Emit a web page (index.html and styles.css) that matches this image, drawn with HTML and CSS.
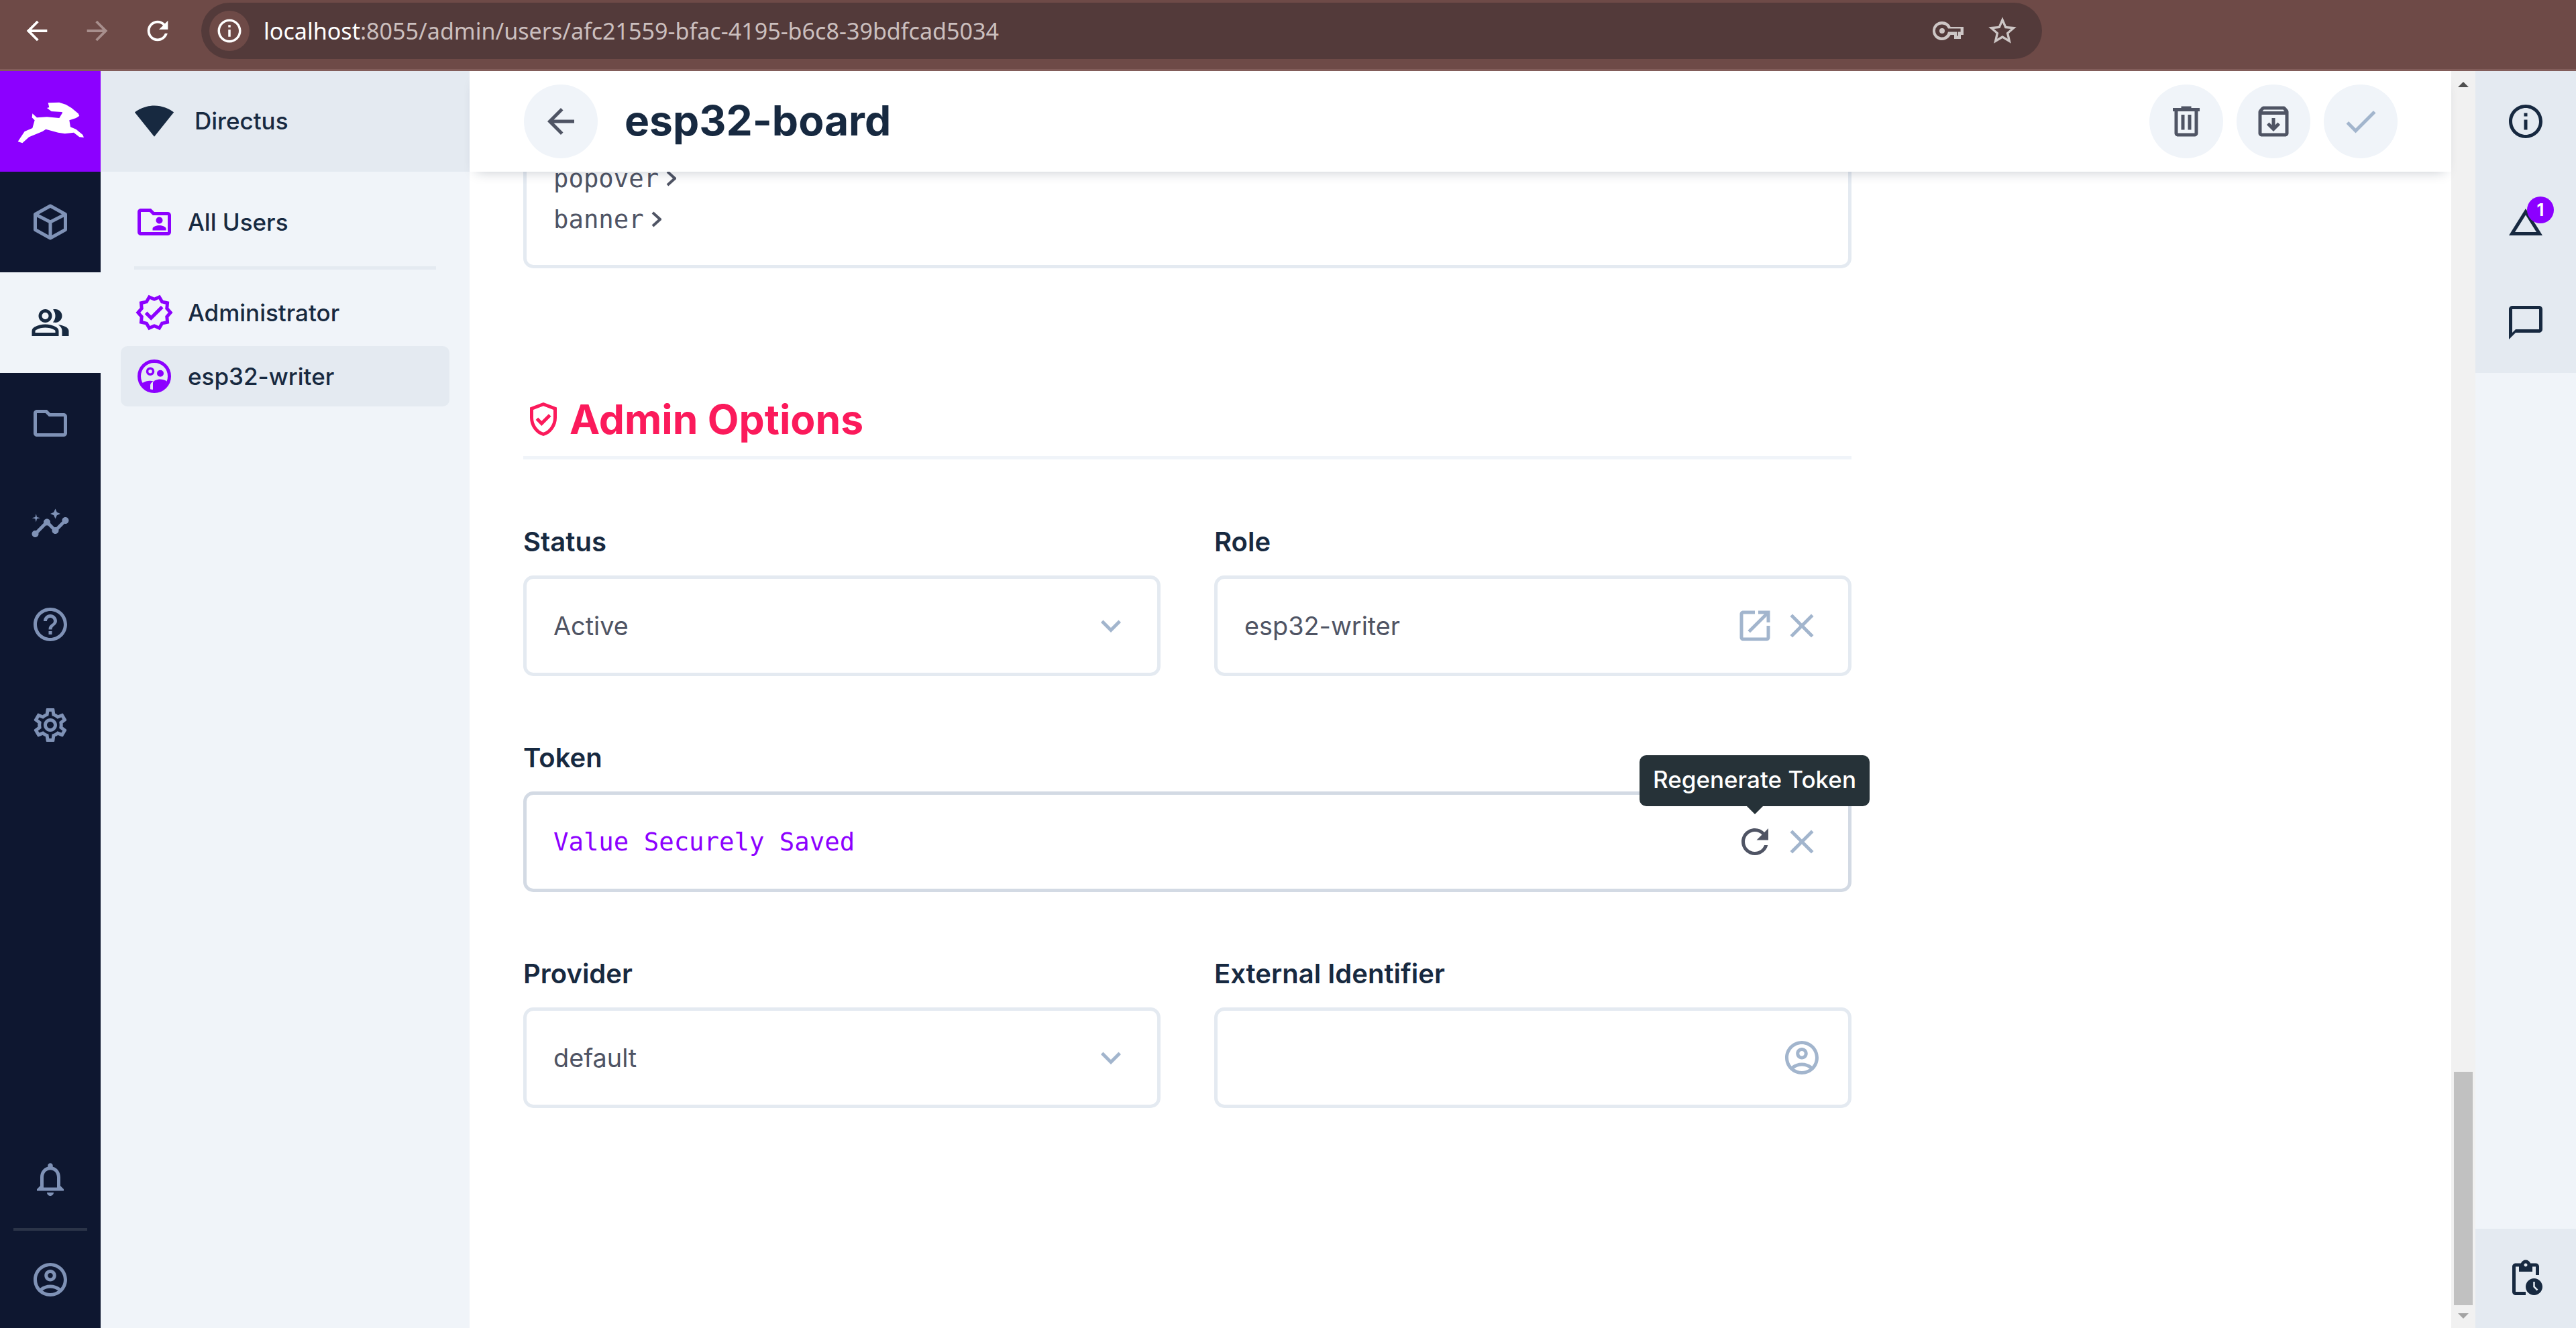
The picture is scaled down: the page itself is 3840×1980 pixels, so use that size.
FILE: index.html
```html
<!DOCTYPE html>
<html>
<head>
  <title>esp32-board</title>
  <link rel="stylesheet" href="styles.css">
</head>
<body>
  <div class="browser">
    <svg class="chrome-icon" viewBox="0 0 24 24"><path d="M20 11H7.83l5.59-5.59L12 4l-8 8 8 8 1.41-1.41L7.83 13H20v-2z"/></svg>
    <svg class="chrome-icon dim" viewBox="0 0 24 24"><path d="M12 4l-1.41 1.41L16.17 11H4v2h12.17l-5.58 5.59L12 20l8-8z"/></svg>
    <svg class="chrome-icon" viewBox="0 0 24 24"><path d="M17.65 6.35C16.2 4.9 14.21 4 12 4c-4.42 0-7.99 3.58-7.99 8s3.57 8 7.99 8c3.73 0 6.84-2.55 7.73-6h-2.08c-.82 2.33-3.04 4-5.65 4-3.31 0-6-2.69-6-6s2.69-6 6-6c1.66 0 3.14.69 4.22 1.78L13 11h7V4l-2.35 2.35z"/></svg>
    <div class="url-bar">
      <div class="url-chip">
        <svg viewBox="0 0 24 24"><path d="M11 7h2v2h-2zm0 4h2v6h-2zm1-9C6.48 2 2 6.48 2 12s4.48 10 10 10 10-4.48 10-10S17.52 2 12 2zm0 18c-4.41 0-8-3.59-8-8s3.59-8 8-8 8 3.59 8 8-3.59 8-8 8z"/></svg>
      </div>
      <div class="url-text"><span class="url-host">localhost</span>:8055/admin/users/afc21559-bfac-4195-b6c8-39bdfcad5034</div>
      <svg class="url-key" viewBox="0 0 24 24"><path d="M7 5a7 7 0 1 0 6.3 10H16v3h5v-3h2V9H13.3A7 7 0 0 0 7 5zm0 2.2a4.8 4.8 0 0 1 4.5 3h9.3v2.6h-1.9v3h-.8v-3h-6.6A4.8 4.8 0 1 1 7 7.2zM7 10a2 2 0 1 0 0 4 2 2 0 0 0 0-4z"/></svg>
      <svg class="url-star" viewBox="0 0 24 24"><path d="M22 9.24l-7.19-.62L12 2 9.19 8.63 2 9.24l5.46 4.73L5.82 21 12 17.27 18.18 21l-1.63-7.03L22 9.24zM12 15.4l-3.76 2.27 1-4.28-3.32-2.88 4.38-.38L12 6.1l1.71 4.04 4.38.38-3.32 2.88 1 4.28L12 15.4z"/></svg>
    </div>
  </div>

  <div class="app">
    <div class="modules">
      <div class="logo">
        <svg viewBox="0 0 390 270"><path d="M50 225 L70 232 L100 205 L160 180 L175 170 L230 185 L260 190 L300 185 L325 205 L345 207 L340 195 L310 170 L285 160 L280 130 L310 120 L325 110 L320 100 L290 75 L265 60 L235 50 L185 52 L190 72 L180 75 L200 90 L245 93 L250 95 L235 120 L180 115 L135 118 L115 100 L113 118 L125 130 L115 165 L80 180 Z"/></svg>
      </div>
      <div class="module">
        <svg class="icon" viewBox="0 0 24 24"><path class="line" d="M12 2.4 21 7.4V16.6L12 21.6 3 16.6V7.4ZM3 7.4 12 12 21 7.4M12 12V21.6"/></svg>
      </div>
      <div class="module active">
        <svg class="icon" viewBox="0 0 24 24"><path d="M1 20v-2.8c0-.57.15-1.09.44-1.56.29-.47.68-.83 1.16-1.09 1.03-.52 2.08-.9 3.15-1.16C6.82 13.13 7.9 13 9 13s2.18.13 3.25.39c1.07.26 2.12.64 3.15 1.16.48.25.87.62 1.16 1.09.29.47.44.99.44 1.56V20H1zm18 0v-3c0-.73-.2-1.43-.61-2.11-.41-.67-.99-1.25-1.74-1.74.85.1 1.65.27 2.4.51.75.24 1.45.54 2.1.88.6.33 1.06.71 1.38 1.11.32.4.47.85.47 1.35V20h-4zM9 12c-1.1 0-2.04-.39-2.83-1.18C5.39 10.04 5 9.1 5 8s.39-2.04 1.18-2.83C6.96 4.39 7.9 4 9 4s2.04.39 2.83 1.18C12.61 5.96 13 6.9 13 8s-.39 2.04-1.18 2.83C11.04 11.61 10.1 12 9 12zm10-4c0 1.1-.39 2.04-1.18 2.83C17.04 11.61 16.1 12 15 12c-.18 0-.42-.02-.7-.06-.28-.04-.52-.09-.7-.14.45-.53.79-1.12 1.04-1.77.24-.65.36-1.32.36-2.03s-.12-1.38-.36-2.03c-.24-.65-.59-1.24-1.04-1.77.23-.08.47-.14.7-.16.23-.03.47-.04.7-.04 1.1 0 2.04.39 2.83 1.18C18.61 5.96 19 6.9 19 8zM3 18h12v-.8c0-.18-.05-.35-.14-.5-.09-.15-.21-.27-.36-.35-.9-.45-1.81-.79-2.73-1.01C10.85 15.11 9.93 15 9 15s-1.85.11-2.77.34c-.92.23-1.83.56-2.73 1.01-.15.08-.27.2-.36.35-.09.15-.14.32-.14.5V18zM9 10c.55 0 1.02-.2 1.41-.59C10.8 9.02 11 8.55 11 8s-.2-1.02-.59-1.41C10.02 6.2 9.55 6 9 6s-1.02.2-1.41.59C7.2 6.98 7 7.45 7 8s.2 1.02.59 1.41C7.98 9.8 8.45 10 9 10z" fill-rule="evenodd"/></svg>
      </div>
      <div class="module">
        <svg class="icon" viewBox="0 0 24 24"><path d="M20 6h-8l-2-2H4c-1.1 0-1.99.9-1.99 2L2 18c0 1.1.9 2 2 2h16c1.1 0 2-.9 2-2V8c0-1.1-.9-2-2-2zm0 12H4V6h5.17l2 2H20v10z"/></svg>
      </div>
      <div class="module">
        <svg class="icon" viewBox="0 0 24 24"><path d="M21 8c-1.45 0-2.26 1.44-1.93 2.51l-3.55 3.56c-.3-.09-.74-.09-1.04 0l-2.55-2.55C12.27 10.45 11.46 9 10 9c-1.45 0-2.27 1.44-1.93 2.52l-4.56 4.55C2.44 15.74 1 16.55 1 18c0 1.1.9 2 2 2 1.45 0 2.26-1.44 1.93-2.51l4.55-4.56c.3.09.74.09 1.04 0l2.55 2.55C12.73 16.55 13.54 18 15 18c1.45 0 2.27-1.44 1.93-2.52l3.56-3.55c1.07.33 2.51-.48 2.51-1.93 0-1.1-.9-2-2-2zM15 9l.94-2.07L18 6l-2.06-.93L15 3l-.92 2.07L12 6l2.08.93zM3.5 11L4 9l2-.5L4 8l-.5-2L3 8l-2 .5L3 9z"/></svg>
      </div>
      <div class="module">
        <svg class="icon" viewBox="0 0 24 24"><path d="M11 18h2v-2h-2v2zm1-16C6.48 2 2 6.48 2 12s4.48 10 10 10 10-4.48 10-10S17.52 2 12 2zm0 18c-4.41 0-8-3.59-8-8s3.59-8 8-8 8 3.59 8 8-3.59 8-8 8zm0-14c-2.21 0-4 1.79-4 4h2c0-1.1.9-2 2-2s2 .9 2 2c0 2-3 1.75-3 5h2c0-2.25 3-2.5 3-5 0-2.21-1.79-4-4-4z"/></svg>
      </div>
      <div class="module">
        <svg class="icon" viewBox="0 0 24 24"><path d="M19.43 12.98c.04-.32.07-.64.07-.98 0-.34-.03-.66-.07-.98l2.11-1.65c.19-.15.24-.42.12-.64l-2-3.46c-.09-.16-.26-.25-.44-.25-.06 0-.12.01-.17.03l-2.49 1c-.52-.4-1.08-.73-1.69-.98l-.38-2.65C14.46 2.18 14.25 2 14 2h-4c-.25 0-.46.18-.49.42l-.38 2.65c-.61.25-1.17.59-1.69.98l-2.49-1c-.06-.02-.12-.03-.18-.03-.17 0-.34.09-.43.25l-2 3.46c-.13.22-.07.49.12.64l2.11 1.65c-.04.32-.07.65-.07.98 0 .33.03.66.07.98l-2.11 1.65c-.19.15-.24.42-.12.64l2 3.46c.09.16.26.25.44.25.06 0 .12-.01.17-.03l2.49-1c.52.4 1.08.73 1.69.98l.38 2.65c.03.24.24.42.49.42h4c.25 0 .46-.18.49-.42l.38-2.65c.61-.25 1.17-.59 1.69-.98l2.49 1c.06.02.12.03.18.03.17 0 .34-.09.43-.25l2-3.46c.12-.22.07-.49-.12-.64l-2.11-1.65zm-1.98-1.71c.04.31.05.52.05.73 0 .21-.02.43-.05.73l-.14 1.13.89.7 1.08.84-.7 1.21-1.27-.51-1.04-.42-.9.68c-.43.32-.84.56-1.25.73l-1.06.43-.16 1.13-.2 1.35h-1.4l-.19-1.35-.16-1.13-1.06-.43c-.43-.18-.83-.41-1.23-.71l-.91-.7-1.06.43-1.27.51-.7-1.21 1.08-.84.89-.7-.14-1.13c-.03-.31-.05-.54-.05-.74s.02-.43.05-.73l.14-1.13-.89-.7-1.08-.84.7-1.21 1.27.51 1.04.42.9-.68c.43-.32.84-.56 1.25-.73l1.06-.43.16-1.13.2-1.35h1.39l.19 1.35.16 1.13 1.06.43c.43.18.83.41 1.23.71l.91.7 1.06-.43 1.27-.51.7 1.21-1.07.85-.89.7.14 1.13zM12 8c-2.21 0-4 1.79-4 4s1.79 4 4 4 4-1.79 4-4-1.79-4-4-4zm0 6c-1.1 0-2-.9-2-2s.9-2 2-2 2 .9 2 2-.9 2-2 2z"/></svg>
      </div>
      <div class="module-bottom">
        <div class="module">
          <svg class="icon" viewBox="0 0 24 24"><path d="M12 22c1.1 0 2-.9 2-2h-4c0 1.1.9 2 2 2zm6-6v-5c0-3.07-1.63-5.64-4.5-6.32V4c0-.83-.67-1.5-1.5-1.5s-1.5.67-1.5 1.5v.68C7.64 5.36 6 7.92 6 11v5l-2 2v1h16v-1l-2-2zm-2 1H8v-6c0-2.48 1.51-4.5 4-4.5s4 2.02 4 4.5v6z"/></svg>
        </div>
        <div class="module-rule"></div>
        <div class="module">
          <svg class="icon" viewBox="0 0 24 24"><path d="M12 2C6.48 2 2 6.48 2 12s4.48 10 10 10 10-4.48 10-10S17.52 2 12 2zM7.35 18.5C8.66 17.56 10.26 17 12 17s3.34.56 4.65 1.5c-1.31.94-2.91 1.5-4.65 1.5s-3.34-.56-4.65-1.5zm10.79-1.38C16.45 15.8 14.32 15 12 15s-4.45.8-6.14 2.12C4.7 15.73 4 13.95 4 12c0-4.42 3.58-8 8-8s8 3.58 8 8c0 1.95-.7 3.73-1.86 5.12zM12 6c-1.93 0-3.5 1.57-3.5 3.5S10.07 13 12 13s3.5-1.57 3.5-3.5S13.93 6 12 6zm0 5c-.83 0-1.5-.67-1.5-1.5S11.17 8 12 8s1.5.67 1.5 1.5S12.83 11 12 11z"/></svg>
        </div>
      </div>
    </div>

    <div class="nav">
      <div class="nav-header">
        <svg class="icon" viewBox="0 0 24 24"><path d="M12.01 21.49L23.64 7c-.45-.34-4.93-4-11.64-4C5.28 3 .81 6.66.36 7l11.63 14.49.01.01.01-.01z"/></svg>
        <span>Directus</span>
      </div>
      <div class="nav-list">
        <div class="nav-item">
          <svg class="icon" viewBox="0 0 24 24"><path d="M20 6h-8l-2-2H4c-1.1 0-1.99.9-1.99 2L2 18c0 1.1.9 2 2 2h16c1.1 0 2-.9 2-2V8c0-1.1-.9-2-2-2zm0 12H4V6h5.17l2 2H20v10zm-5-5c1.1 0 2-.9 2-2s-.9-2-2-2-2 .9-2 2 .9 2 2 2zm-4 4h8v-1c0-1.33-2.67-2-4-2s-4 .67-4 2v1z"/></svg>
          <span>All Users</span>
        </div>
        <div class="nav-rule"></div>
        <div class="nav-item">
          <svg class="icon" viewBox="0 0 24 24"><path d="M23 11.99 20.56 9.2l.34-3.69-3.61-.82L15.4 1.5 12 2.96 8.6 1.5 6.71 4.69 3.1 5.5l.34 3.7L1 11.99l2.44 2.79-.34 3.7 3.61.82 1.89 3.2 3.4-1.47 3.4 1.46 1.89-3.19 3.61-.82-.34-3.69L23 11.99zm-3.95 1.48-.56.65.08.85.18 1.95-1.9.43-.84.19-.44.74-.99 1.68-1.78-.77-.8-.34-.79.34-1.78.77-.99-1.67-.44-.74-.84-.19-1.9-.43.18-1.96.08-.85-.56-.65-1.29-1.47 1.29-1.48.56-.65-.09-.86-.18-1.94 1.9-.43.84-.19.44-.74.99-1.68 1.78.77.8.34.79-.34 1.78-.77.99 1.68.44.74.84.19 1.9.43-.18 1.95-.08.85.56.65 1.29 1.47-1.28 1.48zM10.09 13.75 7.77 11.42l-1.48 1.48 3.8 3.81 7.34-7.36-1.48-1.48z"/></svg>
          <span>Administrator</span>
        </div>
        <div class="nav-item selected">
          <svg class="icon" viewBox="0 0 24 24">
            <circle class="ring" cx="12" cy="12" r="9"/>
            <circle class="ring thin" cx="9.6" cy="9.1" r="1.8"/>
            <circle cx="15.6" cy="10.3" r="2"/>
            <path d="M4.5 16.4c1-1.1 3.6-1.7 5.1-1.7.5 0 1.2.1 1.9.2-1.6.9-1.9 2-1.9 2.7v2.8c-2.3-.6-4.3-2-5.1-4z"/>
            <path d="M11.2 20.9v-5c0-1.4 2.9-2.1 4.4-2.1 1.1 0 2.9.4 3.9 1.2-1.2 3.2-4.3 5.9-8.3 5.9z"/>
          </svg>
          <span>esp32-writer</span>
        </div>
      </div>
    </div>

    <div class="main">
      <div class="header">
        <div class="round-btn back">
          <svg class="icon" viewBox="0 0 24 24"><path d="M20 11H7.83l5.59-5.59L12 4l-8 8 8 8 1.41-1.41L7.83 13H20v-2z"/></svg>
        </div>
        <h1 class="title">esp32-board</h1>
        <div class="actions">
          <div class="round-btn">
            <svg class="icon" viewBox="0 0 24 24"><path d="M7 21c-.55 0-1.02-.2-1.41-.59C5.2 20.02 5 19.55 5 19V6H4V4h5V3h6v1h5v2h-1v13c0 .55-.2 1.02-.59 1.41-.39.39-.86.59-1.41.59H7zM17 6H7v13h10V6zM9 17h2V8H9v9zm4 0h2V8h-2v9z"/></svg>
          </div>
          <div class="round-btn">
            <svg class="icon" viewBox="0 0 24 24"><path d="M5 21c-.55 0-1.02-.2-1.41-.59C3.2 20.02 3 19.55 3 19V6.52c0-.23.04-.46.11-.68.07-.22.18-.42.34-.6l1.25-1.52c.14-.18.31-.33.52-.43C5.42 3.05 5.65 3 5.9 3h12.2c.25 0 .48.05.69.15.21.1.38.25.52.43l1.25 1.52c.15.18.26.38.34.6.07.22.11.45.11.68V19c0 .55-.2 1.02-.59 1.41-.39.39-.86.59-1.41.59H5zm.4-15h13.2l-.85-1H6.25l-.85 1zM5 19h14V8H5v11zm7-1 4-4-1.4-1.4-1.6 1.6V10h-2v4.2l-1.6-1.6L8 14l4 4z"/></svg>
          </div>
          <div class="round-btn muted">
            <svg class="icon" viewBox="0 0 24 24"><path d="M9 16.17L4.83 12l-1.42 1.41L9 19 21 7l-1.41-1.41z"/></svg>
          </div>
        </div>
      </div>

      <div class="content">
        <div class="code-box">
          <div class="code-line">popover<svg class="code-arrow" viewBox="0 0 15 24"><path d="M2 2 13 12 2 22"/></svg></div>
          <div class="code-line">banner<svg class="code-arrow" viewBox="0 0 15 24"><path d="M2 2 13 12 2 22"/></svg></div>
        </div>

        <h2 class="section-title">
          <svg class="icon" viewBox="0 0 24 24"><path d="M12 22c-2.32-.58-4.23-1.91-5.74-3.99C4.75 15.93 4 13.62 4 11.1V5l8-3 8 3v6.1c0 2.52-.75 4.83-2.26 6.91C16.23 20.09 14.32 21.42 12 22zm0-2.1c1.73-.55 3.17-1.65 4.3-3.3 1.13-1.65 1.7-3.48 1.7-5.5V6.38L12 4.13 6 6.38v4.73c0 2.02.57 3.84 1.7 5.49 1.13 1.65 2.57 2.75 4.3 3.3zm-1.05-3.95 5.65-5.65-1.43-1.42-4.22 4.22-2.1-2.1L7.43 12.4l3.52 3.55z"/></svg>
          Admin Options
        </h2>

        <div class="fields">
          <div class="field">
            <div class="label">Status</div>
            <div class="input">
              <span class="value">Active</span>
              <svg class="icon" viewBox="0 0 24 24"><path d="M16.59 8.59L12 13.17 7.41 8.59 6 10l6 6 6-6z"/></svg>
            </div>
          </div>
          <div class="field">
            <div class="label">Role</div>
            <div class="input">
              <span class="value">esp32-writer</span>
              <svg class="icon" viewBox="0 0 24 24"><path d="M19 19H5V5h7V3H5c-1.11 0-2 .9-2 2v14c0 1.1.89 2 2 2h14c1.1 0 2-.9 2-2v-7h-2v7zM14 3v2h3.59l-9.83 9.83 1.41 1.41L19 6.41V10h2V3h-7z"/></svg>
              <svg class="icon" viewBox="0 0 24 24"><path d="M19 6.41L17.59 5 12 10.59 6.41 5 5 6.41 10.59 12 5 17.59 6.41 19 12 13.41 17.59 19 19 17.59 13.41 12z"/></svg>
            </div>
          </div>
          <div class="field wide">
            <div class="label">Token</div>
            <div class="input hover">
              <span class="value secret">Value Securely Saved</span>
              <svg class="icon dark" viewBox="0 0 24 24"><path d="M17.65 6.35C16.2 4.9 14.21 4 12 4c-4.42 0-7.99 3.58-7.99 8s3.57 8 7.99 8c3.73 0 6.84-2.55 7.73-6h-2.08c-.82 2.33-3.04 4-5.65 4-3.31 0-6-2.69-6-6s2.69-6 6-6c1.66 0 3.14.69 4.22 1.78L13 11h7V4l-2.35 2.35z"/></svg>
              <svg class="icon" viewBox="0 0 24 24"><path d="M19 6.41L17.59 5 12 10.59 6.41 5 5 6.41 10.59 12 5 17.59 6.41 19 12 13.41 17.59 19 19 17.59 13.41 12z"/></svg>
              <div class="tooltip">Regenerate Token</div>
            </div>
          </div>
          <div class="field">
            <div class="label">Provider</div>
            <div class="input">
              <span class="value">default</span>
              <svg class="icon" viewBox="0 0 24 24"><path d="M16.59 8.59L12 13.17 7.41 8.59 6 10l6 6 6-6z"/></svg>
            </div>
          </div>
          <div class="field">
            <div class="label">External Identifier</div>
            <div class="input">
              <span class="value"></span>
              <svg class="icon" viewBox="0 0 24 24"><path d="M12 2C6.48 2 2 6.48 2 12s4.48 10 10 10 10-4.48 10-10S17.52 2 12 2zM7.35 18.5C8.66 17.56 10.26 17 12 17s3.34.56 4.65 1.5c-1.31.94-2.91 1.5-4.65 1.5s-3.34-.56-4.65-1.5zm10.79-1.38C16.45 15.8 14.32 15 12 15s-4.45.8-6.14 2.12C4.7 15.73 4 13.95 4 12c0-4.42 3.58-8 8-8s8 3.58 8 8c0 1.95-.7 3.73-1.86 5.12zM12 6c-1.93 0-3.5 1.57-3.5 3.5S10.07 13 12 13s3.5-1.57 3.5-3.5S13.93 6 12 6zm0 5c-.83 0-1.5-.67-1.5-1.5S11.17 8 12 8s1.5.67 1.5 1.5S12.83 11 12 11z"/></svg>
            </div>
          </div>
        </div>
      </div>
    </div>

    <div class="scrollbar">
      <div class="scroll-up"></div>
      <div class="scroll-thumb"></div>
      <div class="scroll-down"></div>
    </div>

    <div class="sidebar">
      <div class="side-top">
        <div class="side-item">
          <svg class="icon" viewBox="0 0 24 24"><path d="M11 7h2v2h-2zm0 4h2v6h-2zm1-9C6.48 2 2 6.48 2 12s4.48 10 10 10 10-4.48 10-10S17.52 2 12 2zm0 18c-4.41 0-8-3.59-8-8s3.59-8 8-8 8 3.59 8 8-3.59 8-8 8z"/></svg>
        </div>
        <div class="side-item">
          <svg class="icon" viewBox="0 0 24 24"><path d="M12 7.77L18.39 18H5.61L12 7.77M12 4L2 20h20L12 4z"/></svg>
          <span class="badge">1</span>
        </div>
        <div class="side-item">
          <svg class="icon" viewBox="0 0 24 24"><path d="M20 2H4c-1.1 0-2 .9-2 2v18l4-4h14c1.1 0 2-.9 2-2V4c0-1.1-.9-2-2-2zm0 14H6l-2 2V4h16v12z"/></svg>
        </div>
      </div>
      <div class="side-bottom">
        <svg class="icon" viewBox="0 0 24 24"><path d="M17 12c-2.76 0-5 2.24-5 5s2.24 5 5 5 5-2.24 5-5-2.24-5-5-5zm1.65 7.35L16.5 17.2V14h1v2.79l1.85 1.85-.7.71zM18 3h-3.18C14.4 1.84 13.3 1 12 1s-2.4.84-2.82 2H6c-1.1 0-2 .9-2 2v15c0 1.1.9 2 2 2h6v-2H6V5h2v3h8V5h2v5h2V5c0-1.1-.9-2-2-2zm-6 2c-.55 0-1-.45-1-1s.45-1 1-1 1 .45 1 1-.45 1-1 1z"/></svg>
      </div>
    </div>
  </div>
</body>
</html>
```

FILE: styles.css
```css
body {
  margin: 0;
  height: 1980px;
  overflow: hidden;
  font-family: Inter, "Liberation Sans", sans-serif;
  color: #172940;
  background-color: #fff;
}

.icon {
  width: 60px;
  height: 60px;
  flex: none;
  fill: currentColor;
}

.line {
  fill: none;
  stroke: currentColor;
  stroke-width: 2;
  stroke-linejoin: round;
}

.ring {
  fill: none;
  stroke: currentColor;
  stroke-width: 2;
}

.ring.thin {
  stroke-width: 1.4;
}

/* browser toolbar */
.browser {
  display: flex;
  align-items: center;
  box-sizing: border-box;
  height: 106px;
  padding: 0 0 11px 32px;
  background-color: #6e4a47;
  border-bottom: 3px solid #825d5a;
}

.chrome-icon {
  width: 46px;
  height: 46px;
  margin-right: 44px;
  flex: none;
  fill: #fff;
}

.chrome-icon.dim {
  fill: #a88f8d;
}

.url-bar {
  display: flex;
  align-items: center;
  width: 2744px;
  height: 84px;
  margin-left: -2px;
  padding-left: 12px;
  box-sizing: border-box;
  border-radius: 42px;
  background-color: #533a3a;
}

.url-chip {
  display: flex;
  align-items: center;
  justify-content: center;
  width: 60px;
  height: 60px;
  border-radius: 50%;
  background-color: #6e4a47;
  flex: none;
}

.url-chip svg {
  width: 42px;
  height: 42px;
  fill: #fff;
}

.url-text {
  flex: 1;
  margin-left: 21px;
  font-family: "Noto Sans", sans-serif;
  font-size: 34.1px;
  color: #cbbfbe;
}

.url-host {
  color: #fff;
}

.url-key {
  width: 48px;
  height: 48px;
  margin-right: 31px;
  fill: #cdc6c5;
}

.url-star {
  width: 50px;
  height: 50px;
  margin-right: 34px;
  fill: #cdc6c5;
}

.app {
  display: flex;
  height: 1874px;
}

/* module bar */
.modules {
  display: flex;
  flex-direction: column;
  width: 150px;
  flex: none;
  background-color: #0e1730;
  color: #7f92b6;
}

.logo {
  display: flex;
  align-items: center;
  justify-content: center;
  height: 150px;
  flex: none;
  background-color: #8c00ff;
}

.logo svg {
  width: 130px;
  height: 90px;
  fill: #fff;
}

.module {
  display: flex;
  align-items: center;
  justify-content: center;
  height: 150px;
  flex: none;
}

.module.active {
  background-color: #f0f4f9;
  color: #172940;
}

.module-bottom {
  margin-top: auto;
  margin-bottom: -3px;
}

.module-rule {
  height: 4px;
  margin: -2px 20px;
  background-color: #2b3448;
}

/* navigation */
.nav {
  width: 550px;
  flex: none;
  background-color: #f0f4f9;
}

.nav-header {
  display: flex;
  align-items: center;
  gap: 30px;
  height: 148px;
  padding: 0 0 2px 50px;
  background-color: #e4eaf1;
  font-size: 35px;
  font-weight: 500;
}

.nav-list {
  padding: 30px 30px 0;
}

.nav-item {
  display: flex;
  align-items: center;
  gap: 20px;
  height: 90px;
  margin-bottom: 5px;
  padding-left: 20px;
  border-radius: 10px;
  font-size: 35px;
  font-weight: 500;
}

.nav-item .icon {
  color: #8c00ff;
}

.nav-item.selected {
  background-color: #e4eaf1;
}

.nav-rule {
  height: 5px;
  margin: 21px 20px 19px;
  background-color: #e4eaf1;
}

/* main column */
.main {
  display: flex;
  flex-direction: column;
  flex: 1;
  min-width: 0;
}

.header {
  display: flex;
  align-items: center;
  position: relative;
  z-index: 2;
  height: 150px;
  flex: none;
  padding: 0 80px 0 81px;
  background-color: #fff;
  box-shadow: 0 10px 17px -10px rgba(23, 41, 64, 0.25);
}

.round-btn {
  display: flex;
  align-items: center;
  justify-content: center;
  width: 110px;
  height: 110px;
  flex: none;
  border-radius: 50%;
  background-color: #f0f4f9;
  color: #4f5464;
}

.round-btn.muted {
  color: #a2b5cd;
}

.title {
  margin: -4px 0 0 40px;
  font-size: 62.3px;
  font-weight: 700;
  color: #172940;
}

.actions {
  display: flex;
  gap: 20px;
  margin-left: auto;
}

.content {
  flex: 1;
  padding-left: 80px;
  overflow: hidden;
}

.code-box {
  box-sizing: border-box;
  width: 1980px;
  height: 185px;
  margin-top: -41px;
  padding: 15px 0 0 40px;
  border: 5px solid #e4eaf1;
  border-radius: 15px;
  font-family: "DejaVu Sans Mono", monospace;
  font-size: 37.3px;
  color: #4f5464;
}

.code-line {
  display: flex;
  align-items: center;
  height: 61px;
}

.code-arrow {
  width: 15px;
  height: 24px;
  margin-left: 11px;
  fill: none;
  stroke: #4f5464;
  stroke-width: 4;
}

.section-title {
  display: flex;
  align-items: center;
  gap: 9px;
  box-sizing: border-box;
  width: 1980px;
  height: 97px;
  margin: 188px 0 0;
  padding-bottom: 19px;
  border-bottom: 5px solid #f0f4f9;
  font-size: 60.6px;
  font-weight: 700;
  color: #fb1a5b;
}

.fields {
  display: grid;
  grid-template-columns: 950px 950px;
  column-gap: 80px;
  row-gap: 99px;
  margin-top: 100px;
}

.field.wide {
  grid-column: 1 / 3;
}

.label {
  height: 48px;
  margin-bottom: 25px;
  font-size: 40px;
  font-weight: 600;
  line-height: 46px;
}

.input {
  display: flex;
  align-items: center;
  gap: 10px;
  position: relative;
  box-sizing: border-box;
  height: 150px;
  padding: 0 39px 0 40px;
  border: 5px solid #e4eaf1;
  border-radius: 15px;
  color: #a2b5cd;
}

.input.hover {
  border-color: #d3dae4;
}

.input .icon.dark {
  color: #4f5464;
}

.value {
  flex: 1;
  font-size: 37.8px;
  color: #4f5464;
}

.value.secret {
  font-family: "DejaVu Sans Mono", monospace;
  font-size: 37.3px;
  color: #8c00ff;
}

.tooltip {
  position: absolute;
  top: -59px;
  right: -32px;
  box-sizing: border-box;
  height: 76px;
  padding: 0 20px;
  border-radius: 10px;
  background-color: #263238;
  color: #fff;
  font-size: 35px;
  font-weight: 500;
  line-height: 72px;
}

.tooltip::after {
  content: "";
  position: absolute;
  left: 50%;
  bottom: -12px;
  margin-left: -12px;
  border-left: 12px solid transparent;
  border-right: 12px solid transparent;
  border-top: 12px solid #263238;
}

/* page scrollbar */
.scrollbar {
  display: flex;
  flex-direction: column;
  align-items: center;
  width: 36px;
  flex: none;
  background-color: #f1f1f1;
}

.scroll-up {
  margin-top: 16px;
  border-left: 8px solid transparent;
  border-right: 8px solid transparent;
  border-bottom: 8px solid #505050;
}

.scroll-thumb {
  width: 28px;
  height: 348px;
  margin-top: auto;
  background-color: #c1c1c1;
}

.scroll-down {
  margin: 12px 0 14px;
  border-left: 8px solid transparent;
  border-right: 8px solid transparent;
  border-top: 8px solid #a3a3a3;
}

/* right sidebar */
.sidebar {
  display: flex;
  flex-direction: column;
  justify-content: space-between;
  width: 150px;
  flex: none;
  background-color: #f0f4f9;
}

.side-top {
  background-color: #e4eaf1;
}

.side-item {
  display: flex;
  align-items: center;
  justify-content: center;
  position: relative;
  height: 150px;
}

.badge {
  position: absolute;
  top: 37px;
  left: 77px;
  width: 40px;
  height: 40px;
  border-radius: 50%;
  background-color: #8c00ff;
  color: #fff;
  font-size: 25px;
  font-weight: 700;
  line-height: 40px;
  text-align: center;
}

.side-bottom {
  display: flex;
  align-items: center;
  justify-content: center;
  height: 148px;
  background-color: #e4eaf1;
}
```
